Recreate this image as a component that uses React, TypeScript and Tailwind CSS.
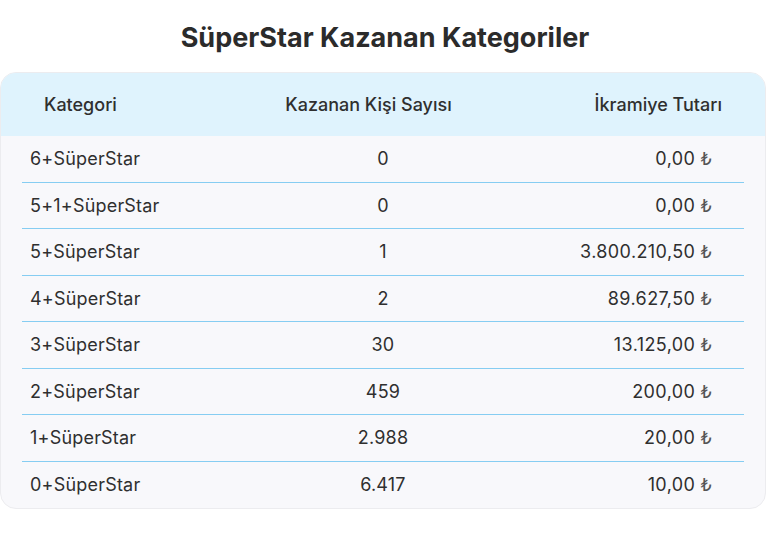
import React from "react";

const rows: [string, string, string][] = [
  ["6+SüperStar", "0", "0,00"],
  ["5+1+SüperStar", "0", "0,00"],
  ["5+SüperStar", "1", "3.800.210,50"],
  ["4+SüperStar", "2", "89.627,50"],
  ["3+SüperStar", "30", "13.125,00"],
  ["2+SüperStar", "459", "200,00"],
  ["1+SüperStar", "2.988", "20,00"],
  ["0+SüperStar", "6.417", "10,00"],
];

export default function App() {
  return (
    <div
      className="w-[770px] h-[549px] bg-white text-[#2f2f2f]"
      style={{ fontFamily: "Inter, 'Noto Sans', sans-serif" }}
    >
      <h1 className="pt-[19px] h-[72px] text-center text-[27px] font-bold leading-[38px] text-[#2b2b2b]">
        SüperStar Kazanan Kategoriler
      </h1>
      <div className="w-[766px] rounded-[16px] border border-[#ececef] bg-[#f8f8fb] overflow-hidden">
        <div className="grid grid-cols-[255px_225px_1fr] h-[63px] items-center bg-[#dff3fd] text-[18px] font-medium">
          <div className="pl-[43px]">Kategori</div>
          <div className="text-center">Kazanan Kişi Sayısı</div>
          <div className="text-right pr-[43px]">İkramiye Tutarı</div>
        </div>
        <div className="px-[21px]">
          {rows.map((r, i) => (
            <div
              key={i}
              className={`grid grid-cols-3 h-[46.5px] items-center text-[18px] tracking-[0.2px] ${
                i < rows.length - 1 ? "border-b border-[#86cdf2]" : ""
              }`}
            >
              <div className="pl-[8px]">{r[0]}</div>
              <div className="text-center">{r[1]}</div>
              <div className="text-right pr-[32px] tracking-[0.4px]">
                {r[2]}{" "}
                <span
                  className="text-[17px] text-[#555]"
                  style={{ fontFamily: "'DejaVu Sans', sans-serif" }}
                >
                  ₺
                </span>
              </div>
            </div>
          ))}
        </div>
      </div>
    </div>
  );
}
